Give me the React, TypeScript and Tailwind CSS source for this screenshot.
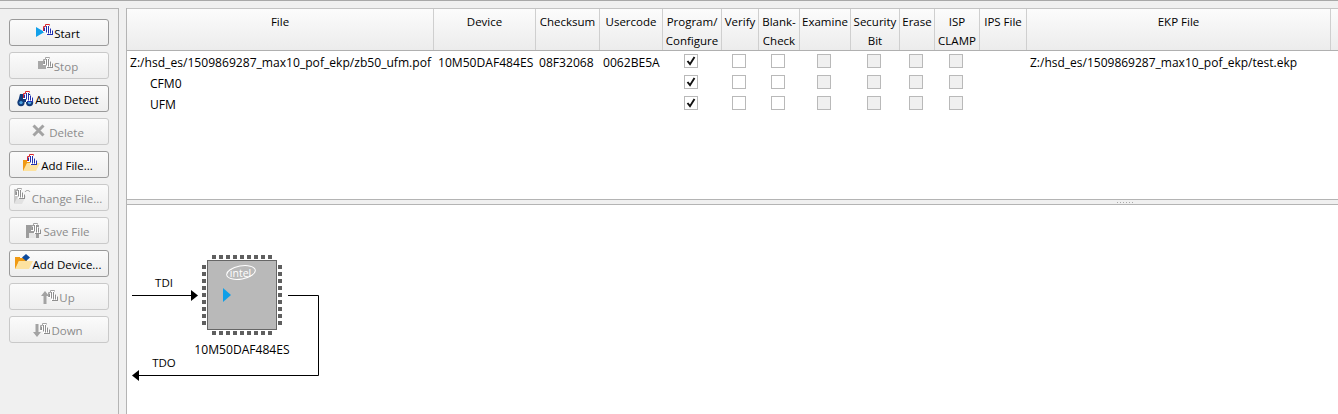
import * as React from 'react';

const font = { fontFamily: '"Open Sans", "Noto Sans", sans-serif' };

// little "programmer" mark that sits on most toolbar icons
const Wave = ({ x, y, disabled }: { x: number; y: number; disabled?: boolean }) => {
  const stroke = disabled ? '#8f8f8f' : '#2030b0';
  const top = disabled ? '#a5a5a5' : '#d8262c';
  return (
    <g transform={`translate(${x} ${y})`} fill="none" strokeWidth="1">
      <path d="M0 8V3h3V1h3v3h2v2h2v5H3V8z" fill="#fff" />
      <path d="M1.5 3.5V7M3.5 2V8.5M5.5 2V9.5M7.5 4.5V9.5M9.5 6.5V10.5" stroke={stroke} />
      <path d="M4 10.5h6" stroke={stroke} />
      <path d="M0.5 7V2.5h2v-2h4v1" stroke={top} />
    </g>
  );
};

const Icon = ({ kind }: { kind: string }) => {
  switch (kind) {
    case 'start':
      return (
        <svg width="18" height="13" viewBox="0 0 18 13" className="mb-1">
          <path d="M0 3v10l8.5-5z" fill="#12a0ea" />
          <Wave x={7} y={0} />
        </svg>
      );
    case 'stop':
      return (
        <svg width="16" height="13" viewBox="0 0 16 13" className="mb-1">
          <rect x="0" y="4" width="8" height="8" fill="#a8a8a8" />
          <Wave x={5} y={0} disabled />
        </svg>
      );
    case 'detect':
      return (
        <svg width="17" height="16" viewBox="0 0 17 16" className="mr-px">
          <path d="M3 3h3v5h4V3h3l3 8H1z" fill="#123a78" />
          <circle cx="4" cy="11.6" r="3.6" fill="#123a78" />
          <circle cx="12.6" cy="11.6" r="3.6" fill="#123a78" />
          <circle cx="4" cy="11.6" r="1.7" fill="#4aa3e0" />
          <circle cx="12.6" cy="11.6" r="1.7" fill="#4aa3e0" />
          <Wave x={6} y={0} />
        </svg>
      );
    case 'delete':
      return (
        <svg width="17" height="13" viewBox="0 0 17 13" className="mb-0.5">
          <path d="M1.5 1.5l10 10M11.5 1.5l-10 10" stroke="#a3a3a3" strokeWidth="3" />
        </svg>
      );
    case 'add':
      return (
        <svg width="18" height="17" viewBox="0 0 18 17" className="mb-1">
          <path d="M0 6h4v1h7v3H4l-3 7H0z" fill="#f09a13" />
          <path d="M4 9h13l-4 8H0z" fill="#fde2a0" />
          <Wave x={4} y={0} />
        </svg>
      );
    case 'change':
      return (
        <svg width="18" height="16" viewBox="0 0 18 16" className="mb-1">
          <path d="M0 1h4v10l-4 5z" fill="#c8c8c8" />
          <path d="M4 8h8l-4 8H0z" fill="#e2e2e2" />
          <Wave x={1} y={0} disabled />
          <path d="M11 4c1-2 4-2 5 0" stroke="#999" fill="none" />
        </svg>
      );
    case 'save':
      return (
        <svg width="17" height="15" viewBox="0 0 17 15">
          <path d="M0 2h13v13H0z" fill="#9c9c9c" />
          <rect x="3" y="10" width="7" height="5" fill="#e6e6e6" />
          <Wave x={5} y={0} disabled />
        </svg>
      );
    case 'device':
      return (
        <svg width="18" height="15" viewBox="0 0 18 15" className="mb-1">
          <path d="M0 3h5v1h7v3H4l-3 8H0z" fill="#f09a13" />
          <path d="M4 7h14l-4 8H0z" fill="#fde2a0" />
          <path d="M11 0l4 3.5-4 3.5-4-3.5z" fill="#0d4a9c" />
        </svg>
      );
    case 'up':
      return (
        <svg width="18" height="14" viewBox="0 0 18 14">
          <path d="M4 1l4 5H5.5v8h-3V6H0z" fill="#a3a3a3" />
          <Wave x={7} y={0} disabled />
        </svg>
      );
    default:
      return (
        <svg width="18" height="14" viewBox="0 0 18 14">
          <path d="M4 14l4-5H5.5V1h-3v8H0z" fill="#a3a3a3" />
          <Wave x={7} y={0} disabled />
        </svg>
      );
  }
};

const buttons = [
  { label: 'Start', icon: 'start', on: true },
  { label: 'Stop', icon: 'stop', on: false },
  { label: 'Auto Detect', icon: 'detect', on: true },
  { label: 'Delete', icon: 'delete', on: false },
  { label: 'Add File...', icon: 'add', on: true },
  { label: 'Change File...', icon: 'change', on: false },
  { label: 'Save File', icon: 'save', on: false },
  { label: 'Add Device...', icon: 'device', on: true },
  { label: 'Up', icon: 'up', on: false },
  { label: 'Down', icon: 'down', on: false },
];

const columns = [
  { w: 'w-[307px]', head: ['File'] },
  { w: 'w-[102px]', head: ['Device'] },
  { w: 'w-[64px]', head: ['Checksum'] },
  { w: 'w-[63px]', head: ['Usercode'] },
  { w: 'w-[59px]', head: ['Program/', 'Configure'] },
  { w: 'w-[37px]', head: ['Verify'] },
  { w: 'w-[41px]', head: ['Blank-', 'Check'] },
  { w: 'w-[51px]', head: ['Examine'] },
  { w: 'w-[49px]', head: ['Security', 'Bit'] },
  { w: 'w-[35px]', head: ['Erase'] },
  { w: 'w-[45px]', head: ['ISP', 'CLAMP'] },
  { w: 'w-[47px]', head: ['IPS File'] },
  { w: 'w-[304px]', head: ['EKP File'] },
];

const rows = [
  { file: 'Z:/hsd_es/1509869287_max10_pof_ekp/zb50_ufm.pof', indent: false, device: '10M50DAF484ES', checksum: '08F32068', usercode: '0062BE5A', ekp: 'Z:/hsd_es/1509869287_max10_pof_ekp/test.ekp' },
  { file: 'CFM0', indent: true, device: '', checksum: '', usercode: '', ekp: '' },
  { file: 'UFM', indent: true, device: '', checksum: '', usercode: '', ekp: '' },
];

const Check = ({ w, checked, off }: { w: string; checked?: boolean; off?: boolean }) => (
  <div className={`${w} flex shrink-0 items-center justify-center pr-[4px] pb-[2px]`}>
    <div className={`flex h-[14px] w-[14px] items-center justify-center border border-[#b9b9b9] ${off ? 'bg-[#f0f0f0]' : 'bg-white'}`}>
      {checked && (
        <svg width="10" height="10" viewBox="0 0 10 10">
          <path d="M1.5 5l2.5 3.2L8.5 1" stroke="#111" strokeWidth="1.9" fill="none" />
        </svg>
      )}
    </div>
  </div>
);

const ChipDiagram = () => {
  const pins = [0, 1, 2, 3, 4, 5, 6, 7, 8];
  return (
    <svg width="1211" height="209" viewBox="127 205 1211 209" className="block" style={font}>
      {pins.map((i) => (
        <g key={i} fill="#5f5f5f">
          <rect x={212 + i * 7} y={255} width="4" height="4" />
          <rect x={212 + i * 7} y={331} width="4" height="4" />
          <rect x={202} y={265 + i * 7} width="4" height="4" />
          <rect x={278} y={265 + i * 7} width="4" height="4" />
        </g>
      ))}
      <rect x="207.5" y="260.5" width="69" height="69" fill="#b9b9b9" stroke="#666" />
      <ellipse cx="241" cy="272.5" rx="14.5" ry="6.5" fill="none" stroke="#fff" strokeWidth="1" transform="rotate(-10 241 272.5)" />
      <text x="240.5" y="276.5" textAnchor="middle" fontSize="10.5" fill="#fff">intel</text>
      <path d="M223 288l8 7-8 7z" fill="#0f9fe8" />
      <path d="M132 295.5h60" stroke="#000" fill="none" />
      <path d="M191 290l7 5.5-7 5.5z" fill="#000" />
      <path d="M288 295.5h30.5v80H138" stroke="#000" fill="none" />
      <path d="M139 370l-7 5.5 7 5.5z" fill="#000" />
      <text x="164" y="287" textAnchor="middle" fontSize="11.5" fill="#000">TDI</text>
      <text x="164" y="367" textAnchor="middle" fontSize="11.5" fill="#000">TDO</text>
      <text x="242" y="354" textAnchor="middle" fontSize="12.1" fill="#000">10M50DAF484ES</text>
    </svg>
  );
};

export default function App() {
  return (
    <div className="flex h-[414px] w-[1338px] flex-col overflow-hidden border-t border-[#a8a8a8] bg-[#f0f0f0] text-[11.5px] text-black" style={font}>
      <div className="flex flex-1 pt-[7px]">
        <div className="flex w-[119px] shrink-0 flex-col gap-[6px] border-t border-r border-[#b4b4b4] pl-[9px] pt-[10px]">
          {buttons.map((b) => (
            <div
              key={b.label}
              className={`flex h-[27px] w-[100px] items-center justify-center rounded-[3px] border bg-gradient-to-b from-[#fbfbfb] to-[#eeeeee] pr-[2px] ${
                b.on ? 'border-[#9a9a9a] text-black' : 'border-[#c9c9c9] text-[#8b8b8b]'
              }`}
            >
              <Icon kind={b.icon} />
              <span className="whitespace-nowrap pt-[2px]">{b.label}</span>
            </div>
          ))}
        </div>

        <div className="ml-[7px] flex min-w-0 flex-1 flex-col border-l border-[#b4b4b4]">
          <div className="h-[191px] shrink-0 border-t border-[#c4c4c4] bg-white">
            <div className="flex h-[42px] border-b border-[#b0b0b0] bg-gradient-to-b from-[#fcfcfc] to-[#ececec]">
              {columns.map((c) => (
                <div key={c.head[0]} className={`${c.w} flex shrink-0 flex-col items-center gap-[3px] whitespace-nowrap border-r border-[#cfcfcf] pt-[5px] leading-4`}>
                  {c.head.map((line) => (
                    <span key={line}>{line}</span>
                  ))}
                </div>
              ))}
            </div>
            {rows.map((r) => (
              <div key={r.file} className="flex h-[21px] items-center text-[12.1px]">
                <div className={`w-[307px] shrink-0 whitespace-nowrap pt-[4px] ${r.indent ? 'pl-[23px]' : 'pl-[3px]'}`}>{r.file}</div>
                <div className="w-[102px] shrink-0 pl-[4px] pt-[4px]">{r.device}</div>
                <div className="w-[64px] shrink-0 pl-[3px] pt-[4px]">{r.checksum}</div>
                <div className="w-[63px] shrink-0 pl-[3px] pt-[4px]">{r.usercode}</div>
                <Check w="w-[59px]" checked />
                <Check w="w-[37px]" />
                <Check w="w-[41px]" />
                <Check w="w-[51px]" off />
                <Check w="w-[49px]" off />
                <Check w="w-[35px]" off />
                <Check w="w-[45px]" off />
                <div className="w-[47px] shrink-0" />
                <div className="whitespace-nowrap pl-[3px] pt-[2px] text-[12px]">{r.ekp}</div>
              </div>
            ))}
          </div>

          <div className="flex h-[6px] shrink-0 items-center justify-end gap-[2px] border-y border-[#b4b4b4] pr-[205px]">
            {[0, 1, 2, 3, 4, 5].map((i) => (
              <div key={i} className="h-px w-px bg-[#a8a8a8]" />
            ))}
          </div>

          <div className="flex-1 bg-white">
            <ChipDiagram />
          </div>
        </div>
      </div>
    </div>
  );
}
